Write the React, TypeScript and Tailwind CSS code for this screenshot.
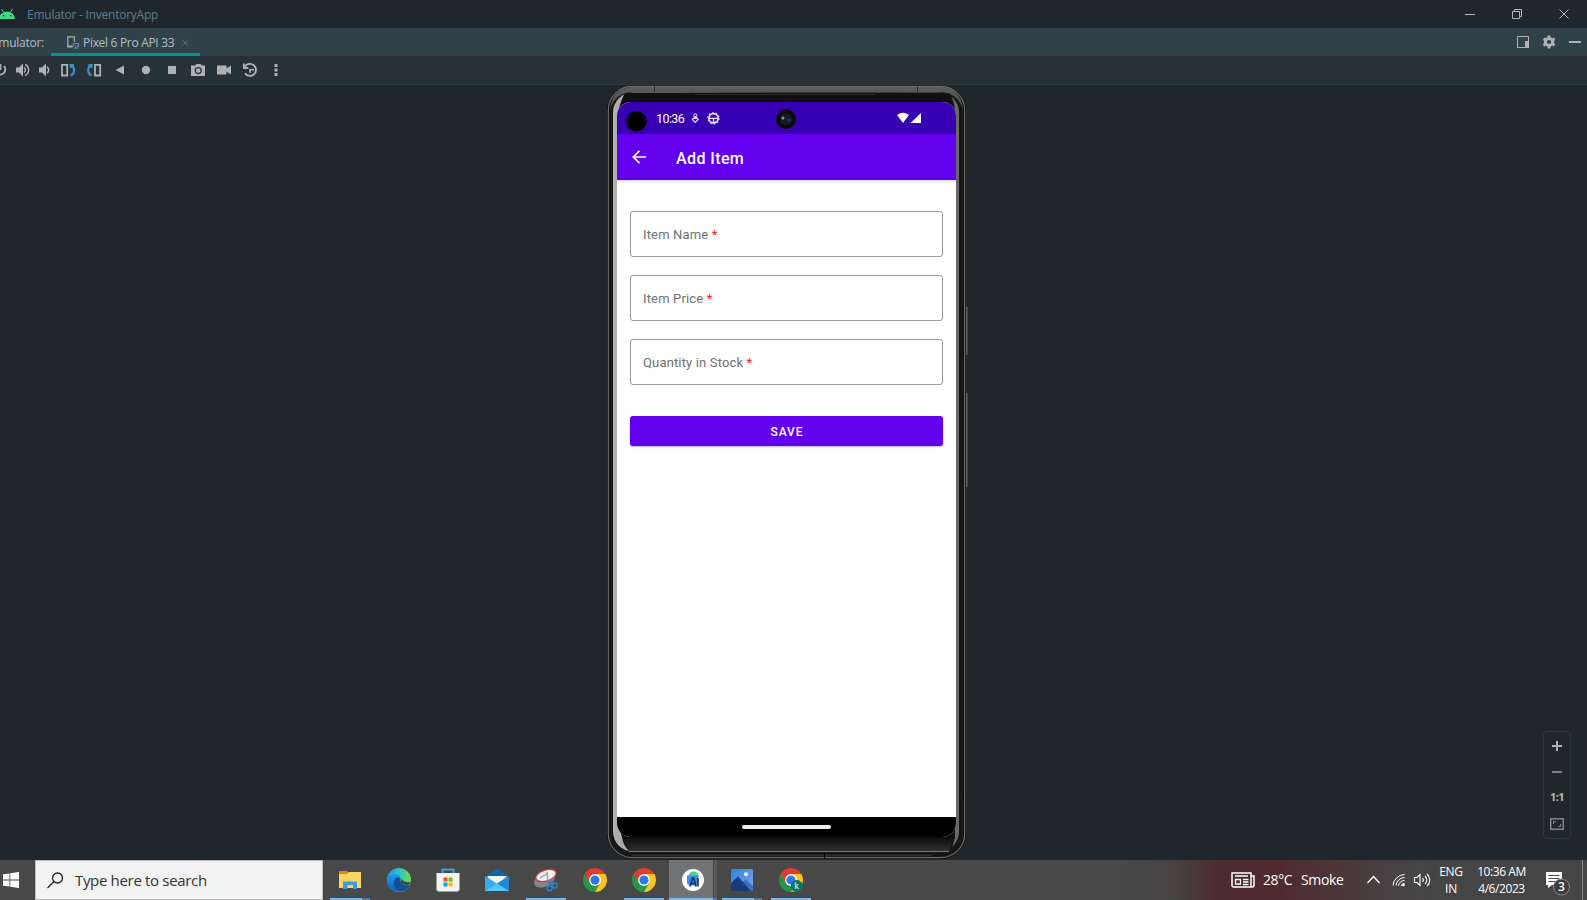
import React from "react";

const P = "#afb1b3";

function TitleBar() {
  return (
    <div className="flex h-7 shrink-0 items-center justify-between bg-[#20272c]">
      <div className="flex items-center">
        <svg width="16" height="10" viewBox="0 0 16 10" className="block">
          <path d="M-1 10a8 7.6 0 0 1 16 0z" fill="#3ddc84" />
          <path d="M1.5 0l2 3M12.5 0l-2 3" stroke="#3ddc84" strokeWidth="1" />
          <circle cx="3.5" cy="6.6" r=".8" fill="#20272c" />
          <circle cx="10.5" cy="6.6" r=".8" fill="#20272c" />
        </svg>
        <span className="ml-[11px] whitespace-nowrap pt-[2px] font-['Open_Sans'] text-[12px] leading-4 tracking-[-0.25px] text-[#607d8b]">Emulator - InventoryApp</span>
      </div>
      <svg width="122" height="28" viewBox="0 0 122 28" fill="none" stroke="#b4b8ba" strokeWidth="1" className="block">
        <path d="M0 14.5h10" />
        <path d="M47.500 11.500h7v7h-7zM49.500 11.500v-2h7v7h-2" />
        <path d="M94.500 9.500l9 9M103.500 9.500l-9 9" />
      </svg>
    </div>
  );
}

function TabBar() {
  return (
    <div className="flex h-7 shrink-0 justify-between bg-[#314149] font-['Open_Sans'] text-[12px] leading-4 text-[#b0bec5]">
      <div className="flex">
        <div className="flex w-[51px] items-center justify-end pr-[7px] pt-[2px]">
          <span className="whitespace-nowrap tracking-[-0.25px]">Emulator:</span>
        </div>
        <div className="flex w-[149px] items-center border-b-[3px] border-[#009688] bg-[#32424a] pt-[3px]">
          <svg width="14" height="15" viewBox="0 0 14 15" fill="none" className="ml-[15px] block">
            <path d="M8.300 7V1.800H1.800V11.500H6.500" stroke="#afb1b3" strokeWidth="1.200" />
            <path d="M1.500 11.500h5" stroke="#afb1b3" strokeWidth="2" />
            <path d="M7.500 11V8.500h5v3.500" stroke="#9b6fb5" strokeWidth="1.200" />
            <path d="M9 10.500h3v3.500h-4z" fill="#009688" />
          </svg>
          <span className="ml-[3px] whitespace-nowrap pt-[2px] tracking-[-0.31px]">Pixel 6 Pro API 33</span>
          <svg width="8" height="8" viewBox="0 0 8 8" className="ml-[7px] mt-px block"><path d="M.500.500l7 7M7.500.500l-7 7" stroke="#5d6d75" /></svg>
        </div>
      </div>
      <svg width="75" height="28" viewBox="0 0 75 28" fill="none" className="block">
        <path d="M5.500 8.500h11v11h-11z" stroke={P} />
        <path d="M13 13h4v7h-4z" fill={P} />
        <circle cx="37" cy="14" r="3.600" stroke={P} strokeWidth="3" />
        <path d="M37 7.500v3M37 17.500v3M31.400 10.800l2.600 1.500M40 15.700l2.600 1.500M31.400 17.200l2.600-1.500M40 12.300l2.600-1.500" stroke={P} strokeWidth="2.800" />
        <path d="M57 14h12" stroke={P} strokeWidth="2" />
      </svg>
    </div>
  );
}

function ToolIcon({ children }: { children: React.ReactNode }) {
  return <svg width="26" height="16" viewBox="0 0 26 16" fill="none" stroke={P} className="block shrink-0">{children}</svg>;
}

function Toolbar() {
  return (
    <div className="flex h-[29px] shrink-0 items-center overflow-hidden border-b border-[#2b383f] bg-[#263238]">
      <div className="-ml-[17px] flex">
        <ToolIcon><path d="M13.500 4.200a5 5 0 1 0 7.500 0M17.300 2v6" strokeWidth="2" /></ToolIcon>
        <ToolIcon>
          <path d="M7 5.500h3l4-4v13l-4-4H7z" fill={P} stroke="none" />
          <path d="M15 5.500a3 3 0 0 1 0 5M16 2.500a6 6 0 0 1 0 11" strokeWidth="1.400" />
        </ToolIcon>
        <ToolIcon>
          <path d="M4 5.500h3l4-4v13l-4-4H4z" fill={P} stroke="none" />
          <path d="M12 5a3.500 3.500 0 0 1 0 6" strokeWidth="1.500" />
        </ToolIcon>
        <ToolIcon>
          <path d="M1 2.800h5.200v10.700H1z" strokeWidth="1.800" />
          <path d="M8.500 3h4.500M9.800 6V2.500M11 3.500c3.500 3 2.500 8.500-1.500 10" stroke="#3592c4" strokeWidth="2.200" />
        </ToolIcon>
        <ToolIcon>
          <path d="M8 2.800h5.200v10.700H8z" strokeWidth="1.800" />
          <path d="M5.800 3H1.300M4.500 6V2.500M3.300 3.500c-3.500 3-2.500 8.500 1.500 10" stroke="#3592c4" strokeWidth="2.200" />
        </ToolIcon>
        <ToolIcon><path d="M11 3.500v9L2.500 8z" fill={P} stroke="none" /></ToolIcon>
        <ToolIcon><circle cx="7" cy="8" r="4.200" fill={P} stroke="none" /></ToolIcon>
        <ToolIcon><path d="M3 4h8v8H3z" fill={P} stroke="none" /></ToolIcon>
        <ToolIcon>
          <path d="M1 3.500h3L5.500 2h4L11 3.500h3V14H0V3.500z" fill={P} stroke="none" />
          <circle cx="7.200" cy="8.600" r="3" stroke="#263238" strokeWidth="1.300" />
        </ToolIcon>
        <ToolIcon><path d="M0 3.500h9.500v3L14 3.500v9l-4.500-3v3H0z" fill={P} stroke="none" /></ToolIcon>
        <ToolIcon>
          <path d="M1.800 4.800A6 6 0 1 1 2 11.200" strokeWidth="1.900" />
          <path d="M.9 1.500v4.500h4.500" strokeWidth="1.800" />
          <path d="M7 11V7.800h4" strokeWidth="1.600" />
        </ToolIcon>
        <ToolIcon><path d="M5.500 2h3v3h-3zM5.500 6.500h3v3h-3zM5.500 11h3v3h-3z" fill={P} stroke="none" /></ToolIcon>
      </div>
    </div>
  );
}

function Bezel() {
  return (
    <svg width="361" height="774" viewBox="0 0 361 774" className="absolute left-0 top-0 block">
      <defs>
        <linearGradient id="top" x1="0" x2="0" y1="0" y2="1"><stop offset="0" stopColor="#5e5e5e" /><stop offset="1" stopColor="#444" /></linearGradient>
        <linearGradient id="chin" x1="0" x2="0" y1="0" y2="1"><stop offset="0" stopColor="#0c0c0c" /><stop offset="1" stopColor="#303030" /></linearGradient>
        <linearGradient id="side" x1="0" x2="1" y1="0" y2="0"><stop offset="0" stopColor="#b0b0b0" /><stop offset=".5" stopColor="#5a5a5a" /><stop offset="1" stopColor="#686868" /></linearGradient>
      </defs>
      <rect x="357.500" y="221" width="2.500" height="48" rx="1" fill="#444" stroke="#8d8d8d" strokeWidth=".6" />
      <rect x="357.500" y="307" width="2.500" height="94" rx="1" fill="#444" stroke="#8d8d8d" strokeWidth=".6" />
      <path d="M358.700 401v310" stroke="#33393c" />
      <rect x=".5" y="-.5" width="358" height="773" rx="25" fill="#161616" stroke="#0d0d0d" />
      <rect x="1.300" y=".3" width="356.400" height="771.400" rx="24" fill="none" stroke="#6f6d6a" strokeWidth="1.200" />
      <path d="M3 24Q5 1 27 1H332Q354 1 356 24Q351 6 331 6H27Q8 6 3 24z" fill="url(#top)" />
      <path d="M310.500 0v6M47.500 0v6" stroke="#2a2a2a" />
      <rect x="6" y="6.500" width="346" height="759" rx="20" fill="url(#side)" />
      <path d="M18 7h324q5 6 6 18v726q-2 10-6 14H22q-6-6-7-14l-5-15V30q3-14 8-23z" fill="#101010" />
      <path d="M15 751h333l-6 14H22z" fill="url(#chin)" />
      <path d="M22 765.500h320" stroke="#777" strokeWidth="1" />
      <path d="M88 8.500h180" stroke="#292929" />
      <path d="M25 769.500h300" stroke="#333" strokeWidth="1.500" />
      <path d="M217.500 766v7" stroke="#000" />
    </svg>
  );
}

function StatusBar() {
  return (
    <div className="flex h-8 shrink-0 items-center bg-[#3700b3]">
      <svg width="339" height="32" viewBox="0 0 339 32" className="block">
        <circle cx="19.500" cy="19.300" r="10.300" fill="#000" />
        <text x="39" y="21" fill="#fff" fontFamily="Roboto" fontSize="12.500" textLength="28.800">10:36</text>
        <g stroke="#e8e0f6" fill="none">
          <circle cx="78.300" cy="13.500" r="1.700" />
          <path d="M78.300 14.500l3 3-3 3-3-3zM76 16.500h4.600" strokeWidth="1.100" />
          <circle cx="96.500" cy="16.300" r="4.600" strokeWidth="1.700" />
          <path d="M92 16.300h9M96.500 16v5" strokeWidth="1.300" />
          <circle cx="96.500" cy="16.300" r="5.600" strokeDasharray="1.500 2" strokeWidth="1.200" />
        </g>
        <circle cx="169" cy="17" r="10" fill="#0b0b0e" />
        <circle cx="169" cy="17" r="6" fill="#141a20" />
        <circle cx="166" cy="16" r="1.500" fill="#7aa0a8" />
        <circle cx="172" cy="18" r="1.600" fill="#183c68" />
        <path d="M280 13q6-4.500 12 0l-6 8z" fill="#fff" />
        <path d="M304 11v10h-10.500z" fill="#fff" />
      </svg>
    </div>
  );
}

function Field({ label }: { label: string }) {
  return (
    <div className="flex h-[46px] items-center rounded-[3px] border border-[#989898] pl-[12px] pt-px font-['Roboto'] text-[13px] text-[#707070]">
      <span className="whitespace-nowrap leading-4 tracking-[0.15px]">{label} <span className="text-[#f81515]">*</span></span>
    </div>
  );
}

function Phone() {
  return (
    <div className="relative ml-[607px] h-[774px] w-[361px]">
      <Bezel />
      <div className="relative ml-[10px] pt-4">
        <div className="flex h-[735px] w-[339px] flex-col overflow-hidden rounded-[14px] bg-white">
          <StatusBar />
          <div className="z-10 flex h-[46px] shrink-0 items-center bg-[#6200ee] shadow-[0_1px_3px_rgba(0,0,0,0.2)]">
            <svg width="14" height="14" viewBox="0 0 14 14" className="ml-[15px] block" fill="none" stroke="#fff" strokeWidth="1.700"><path d="M14 7H1.500M7.500 .8L1.300 7l6.200 6.200" /></svg>
            <span className="ml-[30px] pt-[3px] font-['Roboto'] text-[16px] font-medium leading-5 tracking-[0.4px] text-white">Add Item</span>
          </div>
          <div className="flex grow flex-col px-[13px] pt-[31px]">
            <div className="flex flex-col gap-[18px]">
              <Field label="Item Name" />
              <Field label="Item Price" />
              <Field label="Quantity in Stock" />
            </div>
            <div className="mt-[31px] flex h-[30px] items-center justify-center rounded-[3px] bg-[#6200ee] pl-px pt-[2px] font-['Roboto'] text-[12px] font-medium leading-4 tracking-[0.9px] text-white shadow-[0_1px_2px_rgba(0,0,0,0.3)]">SAVE</div>
          </div>
          <div className="flex h-5 shrink-0 justify-center bg-black pt-2">
            <div className="h-1 w-[89px] rounded-full bg-[#ececec]" />
          </div>
        </div>
      </div>
    </div>
  );
}

function ZoomPanel() {
  return (
    <div className="mb-[21px] mr-4 flex h-[108px] w-7 flex-col items-center rounded border border-[#2b383e] pt-[8px]">
      <svg width="14" height="40" viewBox="0 0 14 40" className="block"><path d="M2 6h10M7 1v10" stroke={P} strokeWidth="2" /><path d="M2 32h10" stroke="#808385" strokeWidth="2" /></svg>
      <span className="mt-[9px] whitespace-nowrap font-['Open_Sans'] text-[11px] font-bold leading-4 tracking-[-0.5px] text-[#b5b7b8]">1:1</span>
      <svg width="14" height="12" viewBox="0 0 14 12" fill="none" stroke="#808385" className="mt-[13px] block"><path d="M.750.750h12.500v10.500H.750z" strokeWidth="1.500" /><path d="M3.500 6V3.500H6M8 8.500h2.500V6" /></svg>
    </div>
  );
}

function Chrome({ badge = false }: { badge?: boolean }) {
  return (
    <svg width="24" height="24" viewBox="0 0 24 24" className="block">
      <path d="M12 12V24A12 12 0 0 0 22.392 6H12z" fill="#fcc41f" />
      <path d="M12 12L1.608 6A12 12 0 0 0 12 24L17.200 15z" fill="#27964a" />
      <path d="M1.608 6A12 12 0 0 1 22.392 6H12a6 6 0 0 0-5.200 9z" fill="#e33b2e" />
      <circle cx="12" cy="12" r="5.900" fill="#fff" />
      <circle cx="12" cy="12" r="4.600" fill="#2e78ec" />
      {badge && <circle cx="17.800" cy="18" r="6" fill="#00796b" />}
      {badge && <text x="15.400" y="21" fontSize="8.500" fontFamily="Roboto" fill="#fff">k</text>}
    </svg>
  );
}

function Slot({ children, line }: { children: React.ReactNode; line?: "plain" | "multi" | "active" }) {
  return (
    <div className={"flex h-10 w-[49px] shrink-0 flex-col items-center" + (line === "active" ? " bg-[linear-gradient(90deg,transparent_1px,#717375_1px,#717375_45px,#454545_45px,#454545_46px,#5a5a5a_46px,#5a5a5a_49px)]" : "")}>
      <div className="flex h-[38px] items-center pt-[1px]">{children}</div>
      {line === "plain" && <div className="h-[2px] w-10 bg-[#76b9ed]" />}
      {line === "multi" && <div className="flex h-[2px] w-10"><div className="w-8 bg-[#76b9ed]" /><div className="w-2 bg-[#527da1]" /></div>}
      {line === "active" && <div className="flex h-[2px] w-[49px] pl-px"><div className="w-11 bg-[#76b9ed]" /><div className="w-1 bg-[#527da1]" /></div>}
    </div>
  );
}

function Taskbar() {
  return (
    <div className="flex h-10 shrink-0 items-center justify-between overflow-hidden bg-[linear-gradient(90deg,#484848_0,#484848_1120px,#474343_1175px,#4c2c2f_1215px,#4e292d_1275px,#4d3538_1330px,#474243_1390px,#454545_1440px)] font-['Open_Sans'] text-white">
      <div className="flex items-center">
        <svg width="16" height="16" viewBox="0 0 16 16" fill="#fff" className="ml-[3px] mr-4 block"><path d="M0 2.300l6.500-.9v6.200H0zM7.300 1.200L16 0v7.600H7.300zM0 8.400h6.500v6.200L0 13.700zM7.300 8.400H16V16l-8.700-1.200z" /></svg>
        <div className="flex h-10 w-[288px] items-center border border-[#bdbdbd] bg-[#f2f2f2]">
          <svg width="17" height="17" viewBox="0 0 17 17" fill="none" stroke="#222" strokeWidth="1.300" className="ml-[11px] block"><circle cx="10.500" cy="6" r="5" /><path d="M7 9.500L.5 16" /></svg>
          <span className="ml-[11px] whitespace-nowrap text-[15px] leading-5 tracking-[-0.33px] text-[#333]">Type here to search</span>
        </div>
        <div className="ml-[2px] flex">
          <Slot line="multi">
            <svg width="22" height="18" viewBox="0 0 22 18" className="block"><path d="M0 0h8l2 2v4H0z" fill="#dc9200" /><path d="M0 3h8l2-2h12v16H0z" fill="#fcd462" /><path d="M4 18v-7.500h14V18h-4v-4H8.500v4z" fill="#3d9be0" /></svg>
          </Slot>
          <Slot>
            <svg width="24" height="24" viewBox="0 0 24 24" className="block">
              <defs>
                <linearGradient id="e1" x1="0" x2="1"><stop offset="0" stopColor="#1e9de3" /><stop offset=".5" stopColor="#2fc0c9" /><stop offset="1" stopColor="#6be04b" /></linearGradient>
                <linearGradient id="e2" x1="0" x2="0" y1="0" y2="1"><stop offset="0" stopColor="#1b9de2" /><stop offset="1" stopColor="#0b5fbd" /></linearGradient>
              </defs>
              <circle cx="12" cy="12" r="12" fill="url(#e1)" />
              <path d="M0 12C1 6 7 5 11 7c3 1.500 3 4 2 6 1 4 6 5 10 3.500C20 24 8 26.500 2.500 19 .8 17 0 14.500 0 12z" fill="url(#e2)" />
              <path d="M8 11c-3 5 0 11 6 12.500 4-.3 7-3 9-7-3 1.500-8 1.500-10-3-.500-1 0-2 0-3-2-1.500-4-1-5 .5z" fill="#124f94" />
              <path d="M13 13.500c1-1 1.500-2.500.500-4.500 1 3 4 6 10.500 5-.500 2-2 3-5 3-3 0-5-1.500-6-3.500z" fill="#484848" />
            </svg>
          </Slot>
          <Slot>
            <svg width="24" height="24" viewBox="0 0 24 24" className="block"><path d="M6.500 6V1.700h11V6" fill="none" stroke="#2eb0ee" strokeWidth="1.800" /><path d="M.500 5h23v16a2.500 2.500 0 0 1-2.500 2.500H3A2.500 2.500 0 0 1 .500 21z" fill="#f3f3f3" /><path d="M7.500 9.500h4v4h-4z" fill="#f25022" /><path d="M12.500 9.500h4v4h-4z" fill="#7fba00" /><path d="M7.500 14.500h4v4h-4z" fill="#00a4ef" /><path d="M12.500 14.500h4v4h-4z" fill="#ffb900" /></svg>
          </Slot>
          <Slot>
            <svg width="24" height="24" viewBox="0 0 24 24" className="block"><path d="M0 8.500L12 .5l12 8z" fill="#1263b3" /><path d="M2 8h20l-8 9H9z" fill="#f5f5f5" /><path d="M0 8l12 7.500L24 8v15H0z" fill="#38abed" /><path d="M12 15.500L24 8v15z" fill="#2289d8" /><path d="M0 23l12-7.500L24 23z" fill="#56c6f7" /></svg>
          </Slot>
          <Slot line="plain">
            <svg width="26" height="24" viewBox="0 0 26 24" className="block"><ellipse cx="11.500" cy="12" rx="11" ry="6.500" fill="#85898c" transform="rotate(-25 11.500 12)" /><ellipse cx="13" cy="7.500" rx="10.500" ry="5.500" fill="#eceff1" stroke="#d93a3a" strokeWidth="1.300" transform="rotate(-18 13 7.500)" /><path d="M7 10l8-5M14 4l1 9" stroke="#9a9da0" strokeWidth="1.300" /><g fill="none" stroke="#2783c6" strokeWidth="1.500"><ellipse cx="16.500" cy="20.500" rx="2.600" ry="2.200" /><ellipse cx="22" cy="17.500" rx="2.400" ry="2.500" /><path d="M18 18.500l1-6M20 16l-6-2" strokeWidth="2" /></g></svg>
          </Slot>
          <Slot><Chrome /></Slot>
          <Slot line="plain"><Chrome /></Slot>
          <Slot line="active">
            <svg width="22" height="22" viewBox="0 0 22 22" className="block"><circle cx="11" cy="11" r="11" fill="#fff" /><path d="M6.500 7a5 4.500 0 0 1 10 0z" fill="#3ddc84" /><path d="M5 6.500h12l-1 3v7H7L5 14z" fill="#4285f4" /><path d="M8 17.500l2.700-8.500h1l2.300 8.500M9.500 14.500h4M16 9v8.500" fill="none" stroke="#0b3050" strokeWidth="1.500" /></svg>
          </Slot>
          <Slot line="multi">
            <svg width="22" height="22" viewBox="0 0 22 22" className="block"><defs><linearGradient id="ph" x1="0" x2="1" y1="0" y2="1"><stop offset="0" stopColor="#2384d8" /><stop offset="1" stopColor="#8a9ff5" /></linearGradient></defs><rect width="22" height="22" rx="1" fill="url(#ph)" /><path d="M11 13l4-2.500 7 6.500v5H12z" fill="#3a6fc4" /><path d="M0 14l7-6.500L20 22H0z" fill="#173c7a" /><circle cx="15" cy="5.200" r="2" fill="#fff" /></svg>
          </Slot>
          <Slot line="plain"><Chrome badge /></Slot>
        </div>
      </div>
      <div className="flex h-10 items-center">
        <svg width="24" height="16" viewBox="0 0 24 16" fill="none" stroke="#fff" strokeWidth="1.500" className="block"><path d="M1 1h19v14H3a2 2 0 0 1-2-2zM20 4h3v9a2 2 0 0 1-2 2h-3M4 4h13" /><path d="M4.500 7.500h5v4.500h-5zM12 7.500h5.500M12 10h5.500M12 12.500h5.500" strokeWidth="1.300" /></svg>
        <span className="ml-2 w-[38px] whitespace-nowrap text-[14px] leading-5 tracking-[-0.4px]">28°C</span>
        <span className="w-[66px] whitespace-nowrap text-[14px] leading-5 tracking-[-0.35px]">Smoke</span>
        <svg width="64" height="16" viewBox="0 0 64 16" fill="none" stroke="#fff" strokeWidth="1.300" className="block">
          <path d="M.500 11L6.500 4.500l6 6.500" />
          <path d="M26 13.500A12 12 0 0 1 37.500 2.500M29 13.500a9 9 0 0 1 8.500-8M31.500 13.800A6 6 0 0 1 37.500 8.500M34 14a3.500 3.500 0 0 1 3.500-2.500" strokeWidth="1" />
          <circle cx="36.500" cy="13" r="1.300" fill="#fff" stroke="none" />
          <path d="M47.500 5.500H50l3-3v11l-3-3h-2.500zM55.500 6a3 3 0 0 1 0 4M58 4a5.500 5.500 0 0 1 0 8M60 2a8 8 0 0 1 0 12" strokeWidth="1.100" />
        </svg>
        <div className="ml-[6px] flex w-[28px] flex-col items-center text-[12px] leading-[17px] tracking-[-0.3px]"><span>ENG</span><span>IN</span></div>
        <div className="ml-[9px] flex w-[56px] flex-col items-center whitespace-nowrap pr-px text-[12px] leading-[17px] tracking-[-0.42px]"><span>10:36 AM</span><span>4/6/2023</span></div>
        <svg width="57" height="40" viewBox="0 0 57 40" className="block">
          <path d="M16 12h16v13H22l-4 3v-3h-2z" fill="#fff" />
          <path d="M18.500 15.500h11M18.500 18.500h11M18.500 21.500h7" stroke="#454545" />
          <circle cx="31.500" cy="27" r="8" fill="#3b3b3b" stroke="#8b8b8b" />
          <text x="31.500" y="31" textAnchor="middle" fontFamily="Open Sans" fontSize="12" fontWeight="600" fill="#fff">3</text>
          <path d="M52.500 0v40" stroke="#8a8a8a" />
        </svg>
      </div>
    </div>
  );
}

export default function App() {
  return (
    <div className="flex h-[900px] w-[1587px] flex-col overflow-hidden bg-[#1f272c]">
      <TitleBar />
      <TabBar />
      <Toolbar />
      <div className="flex h-[775px] shrink-0 items-end justify-between">
        <Phone />
        <ZoomPanel />
      </div>
      <Taskbar />
    </div>
  );
}
